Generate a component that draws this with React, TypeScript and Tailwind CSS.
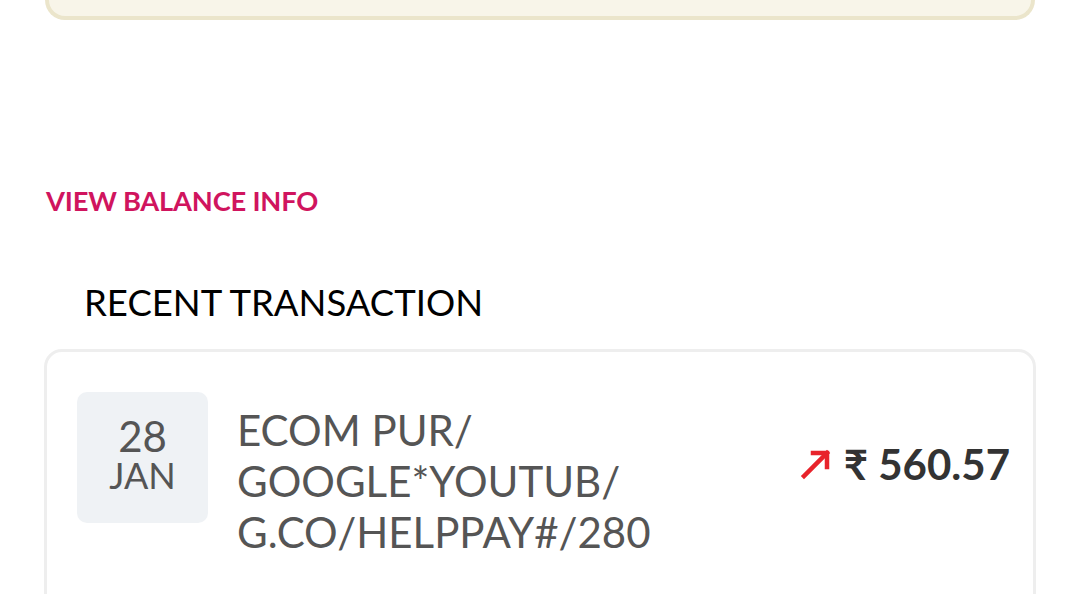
export default function App() {
  return (
    <div className="h-[594px] bg-white font-['Lato','Noto_Sans',sans-serif] overflow-hidden">
      {/* tail of the card above */}
      <div className="mx-[45px] h-[20px] rounded-b-[24px] border-x-4 border-b-4 border-[#ebe5cb] bg-[#f8f5e9]" />

      <div className="px-[46px] pt-[164px]">
        <button className="text-[27.3px] font-bold leading-[34px] tracking-[-0.2px] text-[#d0145e]">
          VIEW BALANCE INFO
        </button>
      </div>

      <h2 className="mt-[62px] pl-[84px] text-[36.5px] leading-[44px] text-black">RECENT TRANSACTION</h2>

      <div className="mx-[44px] mt-[25px] rounded-[18px] border-[3px] border-[#eeeeee] bg-white pl-[30px] pr-[23px] pt-[40px] pb-[60px]">
        <div className="flex items-start">
          <div className="flex h-[131px] w-[131px] shrink-0 flex-col items-center rounded-[10px] bg-[#eff2f5] pt-[24px] text-[#555555]">
            <span className="text-[42px] leading-[40px]">28</span>
            <span className="text-[36px] leading-[38px]">JAN</span>
          </div>
          <div className="ml-[29px] flex-1 pt-[13px] text-[42px] leading-[51px] text-[#555555]">
            ECOM PUR/
            <br />
            GOOGLE*YOUTUB/
            <br />
            G.CO/HELPPAY#/280
          </div>
          <div className="mt-[48px] flex items-center gap-[12px]">
            <svg width="32" height="32" viewBox="0 0 32 32" fill="none" stroke="#e8232b" strokeWidth="4.5" strokeLinecap="square">
              <path d="M4 28 L27 5" />
              <path d="M13 5 H27 V19" />
            </svg>
            <span className="text-[42px] font-bold leading-[48px] text-[#333333]">₹ 560.57</span>
          </div>
        </div>
      </div>
    </div>
  );
}
